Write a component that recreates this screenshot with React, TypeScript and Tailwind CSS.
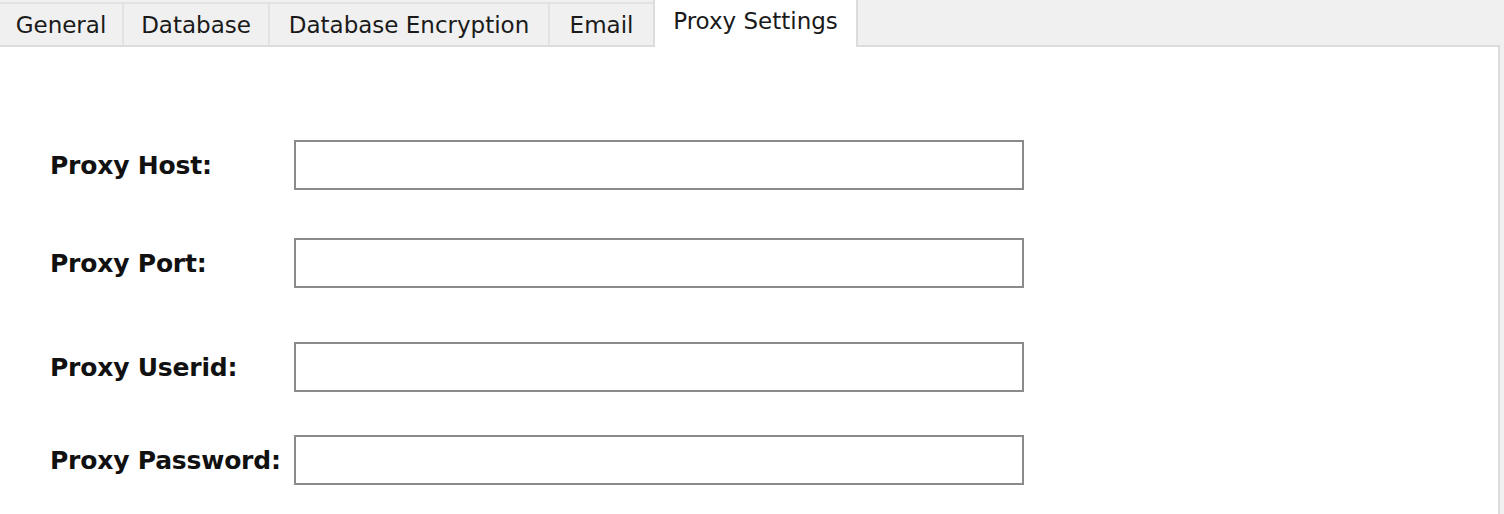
import React from "react";

const tabs = [
  { label: "General", w: 122 },
  { label: "Database", w: 146 },
  { label: "Database Encryption", w: 280 },
  { label: "Email", w: 105 },
];

function Row({ label, mt }: { label: string; mt: string }) {
  return (
    <div className={`flex items-center ${mt}`}>
      <div className="w-[294px] shrink-0 whitespace-nowrap pl-[50px] font-bold text-[25px] text-[#111] leading-none tracking-[-0.2px]">
        {label}
      </div>
      <div className="w-[730px] h-[50px] shrink-0 border-2 border-[#8a8a8a] bg-white" />
    </div>
  );
}

export default function App() {
  return (
    <div
      className="w-[1504px] h-[514px] bg-[#f0f0f0] flex flex-col overflow-hidden"
      style={{ fontFamily: '"DejaVu Sans", "Liberation Sans", sans-serif' }}
    >
      <div className="flex items-end h-[47px] shrink-0 border-b-2 border-[#dcdcdc] mr-[4px]">
        {tabs.map((t, i) => (
          <div
            key={t.label}
            className={`h-[43px] flex items-center justify-center text-[23px] text-[#1a1a1a] bg-[#f0f0f0] border-t-2 border-[#e2e2e2] ${
              i === 0 ? "" : "border-l-2"
            }`}
            style={{ width: t.w }}
          >
            <span className="pt-[2px]">{t.label}</span>
          </div>
        ))}
        <div className="relative z-10 -mb-[2px] h-[49px] w-[205px] bg-white border-x-2 border-[#dcdcdc] flex justify-center pt-[6px] text-[23px] text-[#1a1a1a]">
          <span>Proxy Settings</span>
        </div>
      </div>
      <div className="flex-1 bg-white border-r-2 border-[#dcdcdc] mr-[4px] pt-[93px]">
        <Row label="Proxy Host:" mt="" />
        <Row label="Proxy Port:" mt="mt-[48px]" />
        <Row label="Proxy Userid:" mt="mt-[54px]" />
        <Row label="Proxy Password:" mt="mt-[43px]" />
      </div>
    </div>
  );
}
